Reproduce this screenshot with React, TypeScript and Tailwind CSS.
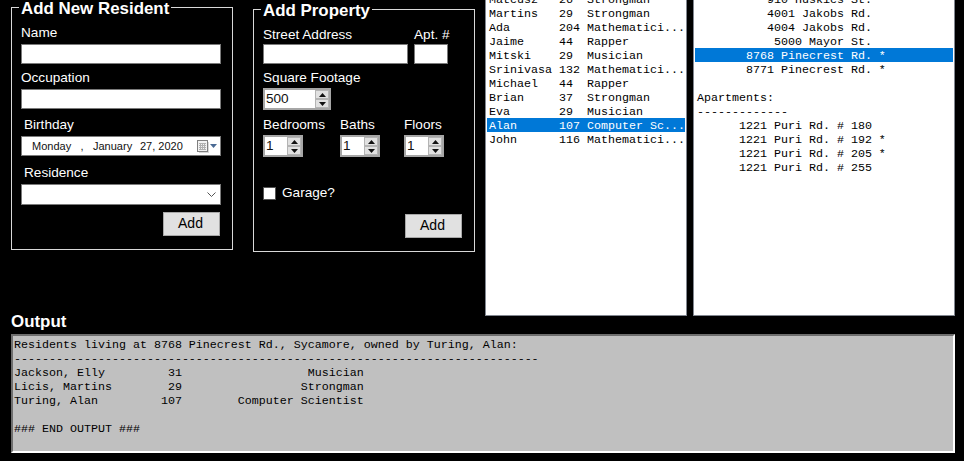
import React from "react";

const Label = ({ children, className = "" }: { children: React.ReactNode; className?: string }) => (
  <div className={`h-[16px] leading-[18px] text-[13.6px] text-white whitespace-nowrap ${className}`}>{children}</div>
);

const TextBox = ({ className = "" }: { className?: string }) => (
  <div className={`h-[20px] bg-white border border-[#7a7a7a] ${className}`} />
);

const AddButton = ({ className = "" }: { className?: string }) => (
  <div className={`w-[57px] h-[24px] flex items-center justify-center bg-[#e1e1e1] border border-[#a8a8a8] pr-[2px] pb-[1px] text-[14px] text-black ${className}`}>Add</div>
);

const Spin = ({ value, width }: { value: string; width: string }) => (
  <div className={`${width} h-[22px] flex items-center justify-between bg-white border-2 border-[#a6a6a6] text-[13.6px] text-[#111] leading-none`}>
    <span className="pl-[1px]">{value}</span>
    <div className="w-[14px] h-[18px] flex flex-col">
      <div className="flex-1 flex items-center justify-center bg-[#e1e1e1] border border-[#b4b4b4]">
        <svg width="7" height="4" viewBox="0 0 7 4"><path d="M3.5 0 7 4H0z" fill="#111" /></svg>
      </div>
      <div className="flex-1 flex items-center justify-center bg-[#e1e1e1] border border-[#b4b4b4]">
        <svg width="7" height="4" viewBox="0 0 7 4"><path d="M0 0h7L3.5 4z" fill="#111" /></svg>
      </div>
    </div>
  </div>
);

const Legend = ({ children }: { children: React.ReactNode }) => (
  <legend className="ml-[-2px] px-[2px] h-[20px] leading-[23px] text-[16.9px] font-bold text-white whitespace-nowrap">{children}</legend>
);

const residents: [string, string, string, boolean?][] = [
  ["Mateusz", "26", "Strongman"],
  ["Martins", "29", "Strongman"],
  ["Ada", "204", "Mathematici..."],
  ["Jaime", "44", "Rapper"],
  ["Mitski", "29", "Musician"],
  ["Srinivasa", "132", "Mathematici..."],
  ["Michael", "44", "Rapper"],
  ["Brian", "37", "Strongman"],
  ["Eva", "29", "Musician"],
  ["Alan", "107", "Computer Sc...", true],
  ["John", "116", "Mathematici..."],
];

const properties: [string, boolean?][] = [
  ["          910 Huskies St."],
  ["          4001 Jakobs Rd."],
  ["          4004 Jakobs Rd."],
  ["           5000 Mayor St."],
  ["       8768 Pinecrest Rd. *", true],
  ["       8771 Pinecrest Rd. *"],
  [" "],
  ["Apartments:"],
  ["-------------"],
  ["      1221 Puri Rd. # 180"],
  ["      1221 Puri Rd. # 192 *"],
  ["      1221 Puri Rd. # 205 *"],
  ["      1221 Puri Rd. # 255"],
];

const row = (name: string, age: string, job: string) =>
  name.padEnd(20) + age.padStart(4) + job.padStart(26);

const output = [
  "Residents living at 8768 Pinecrest Rd., Sycamore, owned by Turing, Alan:",
  "-".repeat(75),
  row("Jackson, Elly", "31", "Musician"),
  row("Licis, Martins", "29", "Strongman"),
  row("Turing, Alan", "107", "Computer Scientist"),
  " ",
  "### END OUTPUT ###",
];

const listBox = "border border-[#828790] p-[1px] bg-white text-black";
const mono = "font-['Liberation_Mono',monospace] text-[11.67px] leading-[16px] whitespace-pre";

export default function App() {
  return (
    <div className="w-[964px] h-[461px] bg-black overflow-hidden font-['Liberation_Sans',Arial,sans-serif]">
      <div className="h-[316px] flex items-start">
        <fieldset className="ml-[11px] mt-[-3px] w-[222px] h-[253px] border border-[#d8d8d8] pl-[9px] pr-[11px] pt-[7px]">
          <Legend>Add New Resident</Legend>
          <Label>Name</Label>
          <TextBox className="mt-[4px]" />
          <Label className="mt-[5px]">Occupation</Label>
          <TextBox className="mt-[4px]" />
          <Label className="mt-[7px] ml-[3px]">Birthday</Label>
          <div className="mt-[4px] h-[20px] bg-white border border-[#7a7a7a] flex items-center pl-[10px] pr-[3px] text-[11px] text-[#111] whitespace-pre">
            <span className="w-[39px]">Monday</span>
            <span className="w-[22px] text-center">,</span>
            <span className="w-[47px]">January</span>
            <span>27, 2020</span>
            <svg className="ml-auto" width="20" height="13" viewBox="0 0 20 13">
              <rect x="2" y="2" width="10" height="11" fill="#d8d8d8" />
              <rect x="0.5" y="0.5" width="10" height="11" fill="#f2f2f2" stroke="#7f7f7f" />
              <path d="M2 3.5h7M2 5.5h7M2 7.5h7M2 9.5h7M3.5 3v7M5.5 3v7M7.5 3v7" stroke="#b0b0b0" strokeWidth="1" fill="none" />
              <path d="M13 4h7l-3.5 4z" fill="#4a6a94" />
            </svg>
          </div>
          <Label className="mt-[8px] ml-[3px]">Residence</Label>
          <div className="mt-[4px] h-[21px] bg-white border border-[#7a7a7a] flex items-center justify-end pr-[4px]">
            <svg width="9" height="5" viewBox="0 0 9 5"><path d="M.5.5l4 4 4-4" fill="none" stroke="#555" /></svg>
          </div>
          <AddButton className="mt-[7px] ml-[142px]" />
        </fieldset>

        <fieldset className="ml-[20px] mt-[-1px] w-[222px] h-[253px] border border-[#d8d8d8] pl-[9px] pr-[11px] pt-[7px]">
          <Legend>Add Property</Legend>
          <div className="flex gap-[6px]">
            <div className="w-[145px]">
              <Label>Street Address</Label>
              <TextBox className="mt-[2px]" />
            </div>
            <div className="w-[34px]">
              <Label>Apt. #</Label>
              <TextBox className="mt-[2px]" />
            </div>
          </div>
          <Label className="mt-[5px]">Square Footage</Label>
          <div className="mt-[3px]"><Spin value="500" width="w-[68px]" /></div>
          <div className="flex mt-[6px]">
            <div className="w-[77px]"><Label>Bedrooms</Label><div className="mt-[3px]"><Spin value="1" width="w-[40px]" /></div></div>
            <div className="w-[64px]"><Label>Baths</Label><div className="mt-[3px]"><Spin value="1" width="w-[40px]" /></div></div>
            <div className="w-[40px]"><Label>Floors</Label><div className="mt-[3px]"><Spin value="1" width="w-[40px]" /></div></div>
          </div>
          <div className="flex items-start gap-[6px] mt-[27px]">
            <div className="mt-[3px] w-[13px] h-[13px] bg-white border border-[#555]" />
            <Label>Garage?</Label>
          </div>
          <AddButton className="mt-[14px] ml-[142px]" />
        </fieldset>

        <div className={`ml-[10px] mt-[-10px] w-[202px] h-[326px] ${listBox} ${mono}`}>
          {residents.map(([n, a, j, sel]) => (
            <div key={n} className={`h-[14px] flex pl-[2px] ${sel ? "bg-[#0078d7] text-white" : ""}`}>
              <span className="w-[70px]">{n}</span>
              <span className="w-[28px]">{a}</span>
              <span>{j}</span>
            </div>
          ))}
        </div>

        <div className={`ml-[6px] mt-[-10px] w-[262px] h-[326px] ${listBox} ${mono}`}>
          {properties.map(([t, sel], i) => (
            <div key={i} className={`h-[14px] pl-[2px] ${sel ? "bg-[#0078d7] text-white" : ""}`}>{t}</div>
          ))}
        </div>
      </div>

      <div className="ml-[11px] h-[18px] leading-[12px] text-[16.9px] font-bold text-white">Output</div>

      <div className={`ml-[11px] w-[944px] h-[119px] bg-[#c0c0c0] pl-[1px] pt-[1px] border-2 border-t-[#6e6e6e] border-l-[#6e6e6e] border-r-white border-b-white ${mono} text-black`}>
        {output.map((l, i) => (
          <div key={i} className="h-[14px]">{l}</div>
        ))}
      </div>
    </div>
  );
}
